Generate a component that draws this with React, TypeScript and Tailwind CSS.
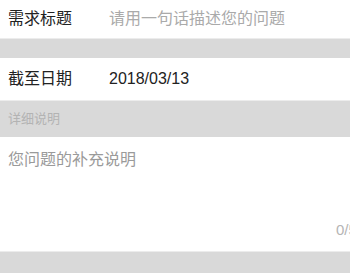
import React from "react";

export default function App() {
  const font = { fontFamily: '"Liberation Sans", "Noto Sans CJK SC", sans-serif' };
  return (
    <div className="w-[350px] h-[280px] overflow-hidden bg-white" style={font}>
      <div className="flex items-center h-[39px] border-b border-[#ececec] bg-white pl-2 text-[16px]">
        <span className="w-[101px] shrink-0 text-[#222]">需求标题</span>
        <span className="text-[#aaa]">请用一句话描述您的问题</span>
      </div>
      <div className="h-[19px] bg-[#d9d9d9]" />
      <div className="flex items-center h-[43px] border-b border-[#ececec] bg-white pl-2 text-[16px]">
        <span className="w-[101px] shrink-0 text-[#222]">截至日期</span>
        <span className="text-[#222]">2018/03/13</span>
      </div>
      <div className="flex items-center h-[36px] bg-[#d9d9d9] pl-2 text-[13px] text-[#b3b3b3]">
        详细说明
      </div>
      <div className="relative h-[115px] border-b border-[#ececec] bg-white">
        <div className="pl-2 pt-[12px] text-[16px] leading-[22px] text-[#9a9a9a]">您问题的补充说明</div>
        <div className="absolute left-[336px] top-[82px] text-[15px] text-[#b5b5b5] whitespace-nowrap">0/500</div>
      </div>
      <div className="h-[21px] bg-[#d9d9d9]" />
      <div className="h-[8px] bg-white" />
    </div>
  );
}
